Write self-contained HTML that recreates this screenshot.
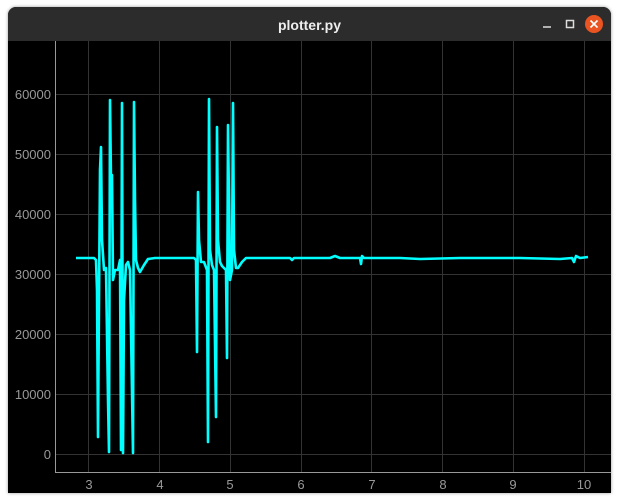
<!DOCTYPE html>
<html><head><style>
html,body{margin:0;padding:0;background:#fff;width:620px;height:502px;overflow:hidden}
.win{position:absolute;left:8px;top:7px;width:603px;height:486px;background:#000;border-radius:8px 8px 0 0;overflow:hidden;box-shadow:0 0 3px rgba(0,0,0,.4)}
.tb{position:absolute;left:0;top:0;width:603px;height:34px;background:#2c2c2c;color:#eee;font:bold 14px "Liberation Sans",sans-serif;text-align:center;line-height:36px}
svg text{font-family:"Liberation Sans",sans-serif;font-size:13px;fill:#999}
</style></head><body>
<div class="win">
<div class="tb">plotter.py</div>
<svg style="position:absolute;left:0;top:0" width="603" height="34">
<line x1="535" y1="20" x2="543" y2="20" stroke="#ddd" stroke-width="1.5"/>
<rect x="558.5" y="13.5" width="7" height="7" fill="none" stroke="#ddd" stroke-width="1.5"/>
<circle cx="586" cy="17" r="9" fill="#e95420"/>
<path d="M582.5 13.5L589.5 20.5M589.5 13.5L582.5 20.5" stroke="#fff" stroke-width="1.6"/>
</svg>
</div>
<svg style="position:absolute;left:0;top:0" width="620" height="502">
<g stroke="#333" stroke-width="1">
<line x1="88.5" y1="41" x2="88.5" y2="472"/><line x1="159.5" y1="41" x2="159.5" y2="472"/><line x1="230.5" y1="41" x2="230.5" y2="472"/><line x1="301.5" y1="41" x2="301.5" y2="472"/><line x1="371.5" y1="41" x2="371.5" y2="472"/><line x1="442.5" y1="41" x2="442.5" y2="472"/><line x1="513.5" y1="41" x2="513.5" y2="472"/><line x1="584.5" y1="41" x2="584.5" y2="472"/>
<line x1="55" y1="94.5" x2="611" y2="94.5"/><line x1="55" y1="154.5" x2="611" y2="154.5"/><line x1="55" y1="214.5" x2="611" y2="214.5"/><line x1="55" y1="274.5" x2="611" y2="274.5"/><line x1="55" y1="334.5" x2="611" y2="334.5"/><line x1="55" y1="394.5" x2="611" y2="394.5"/><line x1="55" y1="454.5" x2="611" y2="454.5"/>
</g>
<path d="M55.5 41V472.5H611" stroke="#999" fill="none"/>
<g text-anchor="end"><text x="51" y="99">60000</text><text x="51" y="159">50000</text><text x="51" y="219">40000</text><text x="51" y="279">30000</text><text x="51" y="339">20000</text><text x="51" y="399">10000</text><text x="51" y="459">0</text></g>
<g text-anchor="middle"><text x="89" y="489">3</text><text x="160" y="489">4</text><text x="230" y="489">5</text><text x="301" y="489">6</text><text x="372" y="489">7</text><text x="443" y="489">8</text><text x="513" y="489">9</text><text x="584" y="489">10</text></g>
<polyline fill="none" stroke="#00ffff" stroke-width="2.6" stroke-linejoin="round" points="76,258 94,258 96,260 97,290 98,437 99,300 100,170 101,147 102,240 104,270 106,268 108,400 109,452 110,100 111,180 112,175 113,280 115,270 118,270 120,260 121,450 122,103 123,453 124,300 126,265 128,262 130,270 133,453 134,102 135,200 136,260 138,268 140,272 144,265 148,259 155,258 194,258 196,260 197,352 198,192 199,240 201,262 204,262 207,270 208,442 209,99 210,250 212,265 214,270 216,417 217,127 218,240 220,262 222,266 226,270 227,358 228,125 230,280 232,270 233,103 234,250 236,268 238,268 242,262 246,258 290,258 292,260 294,258 330,258 335,256 340,258 360,258 361,264 362,256 364,258 400,258 420,259 460,258 520,258 560,259 572,258 574,262 576,256 580,258 588,257"/>
</svg>
</body></html>
